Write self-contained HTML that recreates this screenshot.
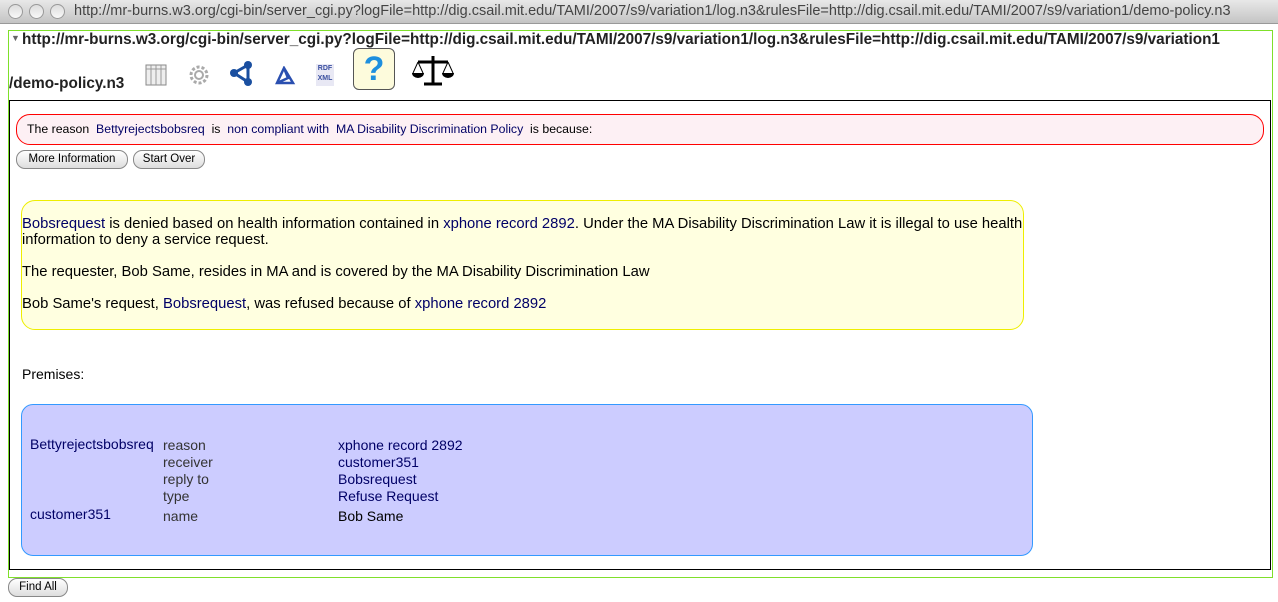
<!DOCTYPE html>
<html><head><style>
body{margin:0;width:1278px;height:602px;background:#fff;font-family:"Liberation Sans",sans-serif;position:relative;overflow:hidden}
.abs{position:absolute}
.bar{left:0;top:0;width:1278px;height:23px;background:linear-gradient(#e8e8e8,#c4c4c4);border-bottom:1px solid #999;font-size:14.5px;color:#444;}
.dot{position:absolute;top:4px;width:13px;height:13px;border-radius:50%;background:linear-gradient(#ddd,#f8f8f8);border:1px solid #999}
.btn{position:absolute;height:17px;border:1px solid #888;border-radius:9px;background:linear-gradient(#fff,#ddd);font-size:11.5px;line-height:17px;text-align:center;color:#000}
.l{color:#000066}
.t{font-size:14px;color:#000}
.y{font-size:14.8px;color:#000}
</style></head><body>
<div class="abs bar"><div class="dot" style="left:8px"></div><div class="dot" style="left:29px"></div><div class="dot" style="left:50px"></div><span class="abs" style="left:74px;top:3px">http://mr-burns.w3.org/cgi-bin/server_cgi.py?logFile=http://dig.csail.mit.edu/TAMI/2007/s9/variation1/log.n3&amp;rulesFile=http://dig.csail.mit.edu/TAMI/2007/s9/variation1/demo-policy.n3</span></div>
<div class="abs" style="left:8px;top:30px;width:1263px;height:546px;border:1px solid #7fe02a"></div>
<div class="abs" style="left:11px;top:33px;font-size:9px;color:#666">▼</div>
<div class="abs" style="left:22px;top:31px;font-size:15.3px;font-weight:bold;color:#222">http://mr-burns.w3.org/cgi-bin/server_cgi.py?logFile=http://dig.csail.mit.edu/TAMI/2007/s9/variation1/log.n3&amp;rulesFile=http://dig.csail.mit.edu/TAMI/2007/s9/variation1</div>
<div class="abs" style="left:9px;top:75px;font-size:15.3px;font-weight:bold;color:#222">/demo-policy.n3</div>
<svg class="abs" style="left:145px;top:64px" width="22" height="22"><rect x="1" y="1" width="20" height="20" fill="#eee" stroke="#888"/><path d="M1 5H21M6 1V21M11 1V21M16 1V21" stroke="#999"/></svg>
<svg class="abs" style="left:188px;top:64px" width="22" height="22"><circle cx="11" cy="11" r="8" fill="none" stroke="#aaa" stroke-width="3" stroke-dasharray="3 2"/><circle cx="11" cy="11" r="4" fill="none" stroke="#aaa" stroke-width="2"/></svg>
<svg class="abs" style="left:230px;top:61px" width="24" height="26"><path d="M4 12L18 4M4 12L18 21M18 4V21" stroke="#1a4fa0" stroke-width="3"/><circle cx="4" cy="12" r="4" fill="#1a4fa0"/><circle cx="18" cy="4" r="4" fill="#1a4fa0"/><circle cx="18" cy="21" r="4" fill="#1a4fa0"/></svg>
<svg class="abs" style="left:274px;top:66px" width="22" height="20"><path d="M10 2L3 17H19ZM10 2L14 12L3 17" stroke="#2a4fb0" stroke-width="2.5" fill="none"/></svg>
<div class="abs" style="left:316px;top:64px;width:18px;height:22px;background:#e8e8f4;font-size:7px;font-weight:bold;color:#3a4fa0;text-align:center;line-height:10px">RDF<br>XML</div>
<div class="abs" style="left:353px;top:48px;width:40px;height:40px;border:1px solid #555;border-radius:6px;background:#fdfbdc;font-size:34px;font-weight:bold;color:#1e8fde;text-align:center;line-height:40px">?</div>
<svg class="abs" style="left:412px;top:54px" width="42" height="32"><path d="M21 2V30M6 8H36M12 30H30" stroke="#000" stroke-width="3"/><path d="M6 8L1 19M6 8L11 19M36 8L31 19M36 8L41 19" stroke="#000" stroke-width="1"/><path d="M0 19H12A6 5 0 0 1 0 19ZM30 19H42A6 5 0 0 1 30 19Z" fill="#000"/></svg>
<div class="abs" style="left:9px;top:100px;width:1260px;height:468px;border:1px solid #000"></div>
<div class="abs" style="left:16px;top:114px;width:1246px;height:29px;border:1px solid #f00;border-radius:14px;background:#fdf0f4"></div>
<div class="abs" style="left:27px;top:122px;font-size:12.3px;color:#000">The reason &nbsp;<span class="l">Bettyrejectsbobsreq</span>&nbsp; is &nbsp;<span class="l">non compliant with</span>&nbsp; <span class="l">MA Disability Discrimination Policy</span>&nbsp; is because:</div>
<div class="btn" style="left:16px;top:150px;width:110px">More Information</div>
<div class="btn" style="left:133px;top:150px;width:70px">Start Over</div>
<div class="abs" style="left:21px;top:200px;width:1001px;height:128px;border:1px solid #ee0;border-radius:14px;background:#ffffe0"></div>
<div class="abs y" style="left:22px;top:216px;width:1003px;line-height:16px"><span class="l">Bobsrequest</span> is denied based on health information contained in <span class="l">xphone record 2892</span>. Under the MA Disability Discrimination Law it is illegal to use health information to deny a service request.</div>
<div class="abs y" style="left:22px;top:264px">The requester, Bob Same, resides in MA and is covered by the MA Disability Discrimination Law</div>
<div class="abs y" style="left:22px;top:296px">Bob Same's request, <span class="l">Bobsrequest</span>, was refused because of <span class="l">xphone record 2892</span></div>
<div class="abs t" style="left:22px;top:366px">Premises:</div>
<div class="abs" style="left:21px;top:404px;width:1010px;height:150px;border:1px solid #3399ff;border-radius:12px;background:#ccccff"></div>
<div class="abs t" style="left:30px;top:436px;color:#000066">Bettyrejectsbobsreq</div>
<div class="abs t" style="left:30px;top:506px;color:#000066">customer351</div>
<div class="abs t" style="left:163px;top:437px;line-height:17px;color:#333">reason<br>receiver<br>reply to<br>type</div>
<div class="abs t" style="left:163px;top:508px;color:#333">name</div>
<div class="abs t" style="left:338px;top:437px;line-height:17px;color:#000066">xphone record 2892<br>customer351<br>Bobsrequest<br>Refuse Request</div>
<div class="abs t" style="left:338px;top:508px">Bob Same</div>
<div class="btn" style="left:8px;top:578px;width:58px">Find All</div>
</body></html>
